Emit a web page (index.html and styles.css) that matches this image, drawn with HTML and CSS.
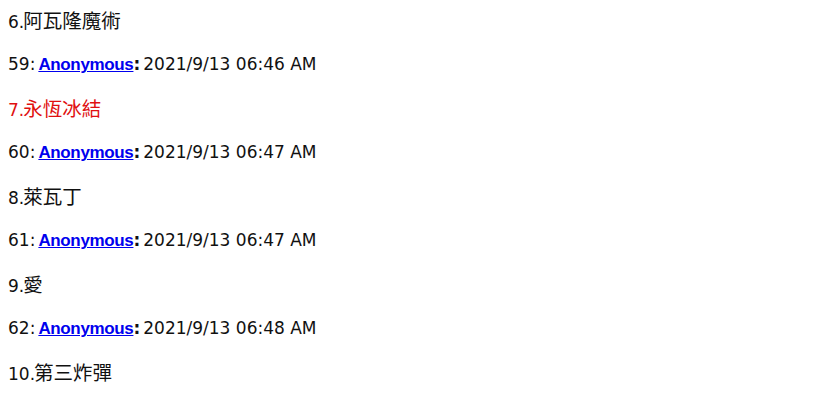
FILE: index.html
```html
<!DOCTYPE html>
<html lang="zh-Hant">
<head>
    <meta charset="UTF-8">
    <title>Thread</title>
    <link rel="stylesheet" href="styles.css">
</head>
<body>
    <div class="thread">
        <div class="line title"><span class="num">6.</span>阿瓦隆魔術</div>
        <div class="line meta">59<span class="sep">:</span><a href="#"><b>Anonymous</b></a><b class="sep2">:</b>2021/9/13 06:46 AM</div>
        <div class="line title red"><span class="num">7.</span>永恆冰結</div>
        <div class="line meta">60<span class="sep">:</span><a href="#"><b>Anonymous</b></a><b class="sep2">:</b>2021/9/13 06:47 AM</div>
        <div class="line title"><span class="num">8.</span>萊瓦丁</div>
        <div class="line meta">61<span class="sep">:</span><a href="#"><b>Anonymous</b></a><b class="sep2">:</b>2021/9/13 06:47 AM</div>
        <div class="line title"><span class="num">9.</span>愛</div>
        <div class="line meta">62<span class="sep">:</span><a href="#"><b>Anonymous</b></a><b class="sep2">:</b>2021/9/13 06:48 AM</div>
        <div class="line title"><span class="num">10.</span>第三炸彈</div>
    </div>
</body>
</html>
```

FILE: styles.css
```css
body {
    margin: 8px;
    background: #fff;
    color: #111;
    font-family: "DejaVu Sans", "Noto Sans CJK TC", sans-serif;
    font-size: 17px;
}
.thread {
    display: flex;
    flex-direction: column;
    gap: 20px;
}
.line {
    line-height: 24px;
    height: 24px;
    white-space: nowrap;
}
.title {
    font-family: "Noto Sans CJK TC", sans-serif;
    font-size: 19.5px;
}
.title .num {
    font-family: "DejaVu Sans", sans-serif;
    font-size: 17px;
    margin-right: -1px;
}
.red {
    color: #e01010;
}
.sep {
    padding-right: 3px;
}
.sep2 {
    padding-right: 3px;
}
a {
    color: #0000ee;
    font-family: "Liberation Sans", sans-serif;
    font-size: 17px;
    letter-spacing: -0.35px;
}
```
